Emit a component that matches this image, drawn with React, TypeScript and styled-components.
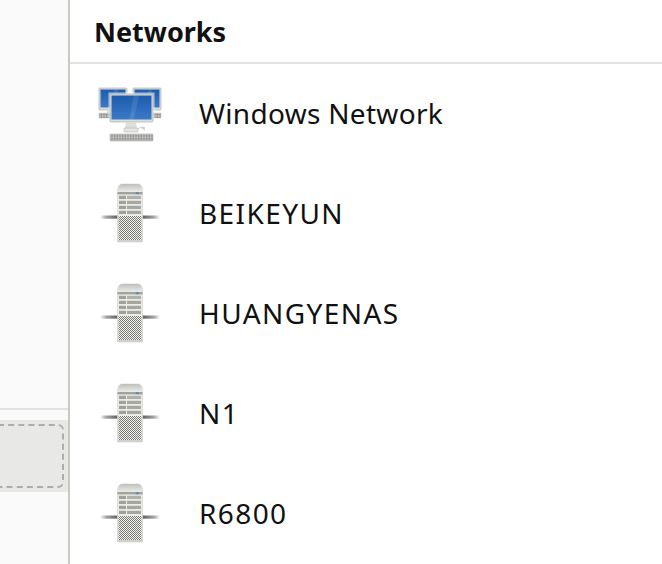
import styled, { createGlobalStyle } from "styled-components";

const hosts = ["BEIKEYUN", "HUANGYENAS", "N1", "R6800"];

const GlobalStyle = createGlobalStyle`
  html, body {
    margin: 0;
    padding: 0;
    background: #ffffff;
    overflow: hidden;
  }
`;

const Monitor = ({ x, y, w, h }: { x: number; y: number; w: number; h: number }) => (
  <g>
    <rect x={x} y={y} width={w} height={h} rx="0.8" fill="#dcdedb" stroke="#a4a6a2" strokeWidth="0.6" />
    <rect x={x + 1.5} y={y + 1.5} width={w - 3} height={h - 4} fill="url(#screen)" />
    <path d={`M${x + w * 0.55} ${y + 1.5} L${x + w * 0.68} ${y + 1.5} L${x + w * 0.55} ${y + h - 2.5} L${x + w * 0.45} ${y + h - 2.5} Z`} fill="#ffffff" opacity="0.1" />
  </g>
);

const NetworkIcon = () => (
  <Icon viewBox="0 0 64 64">
    <defs>
      <linearGradient id="screen" x1="0" y1="0" x2="0" y2="1">
        <stop offset="0" stopColor="#1d5cae" />
        <stop offset="1" stopColor="#3a7ac8" />
      </linearGradient>
      <pattern id="keys" width="1.6" height="1.6" patternUnits="userSpaceOnUse">
        <rect width="1.6" height="1.6" fill="#d4d4d1" />
        <rect width="1" height="1" fill="#6f7170" />
      </pattern>
    </defs>
    {/* back left */}
    <Monitor x={1} y={6} w={28} h={22} />
    <rect x="9" y="28" width="9" height="3" fill="#d6d8d5" />
    <rect x="1" y="31" width="13" height="5" fill="url(#keys)" stroke="#b8b9b6" strokeWidth="0.4" />
    {/* back right */}
    <Monitor x={35} y={6} w={28} h={22} />
    <rect x="46" y="28" width="9" height="3" fill="#d6d8d5" />
    <rect x="55" y="31" width="8" height="5" fill="url(#keys)" stroke="#b8b9b6" strokeWidth="0.4" />
    {/* front */}
    <rect x="10.5" y="10.5" width="46" height="31" fill="#ffffff" opacity="0.6" />
    <Monitor x={12} y={12} w={43} h={28} />
    <path d="M28 40 H38 L39 46 H27 Z" fill="#dedfdc" />
    <rect x="26" y="46" width="14" height="4" rx="1" fill="#e6e7e4" stroke="#a9aba7" strokeWidth="0.5" />
    <path d="M40 47 C44 44 47 45 46 49" fill="none" stroke="#b4b5b2" strokeWidth="0.7" />
    <rect x="44" y="45" width="3" height="2" rx="0.8" fill="#c9cac7" />
    <rect x="12" y="52" width="43" height="7" rx="0.6" fill="url(#keys)" stroke="#aeb0ac" strokeWidth="0.6" />
  </Icon>
);

const ServerIcon = () => (
  <Icon viewBox="0 0 64 64">
    <defs>
      <pattern id="mesh" width="2" height="2" patternUnits="userSpaceOnUse">
        <rect width="2" height="2" fill="#f4f4f2" />
        <rect width="1" height="1" fill="#777872" />
        <rect x="1" y="1" width="1" height="1" fill="#777872" />
      </pattern>
      <linearGradient id="cap" x1="0" y1="0" x2="0" y2="1">
        <stop offset="0" stopColor="#bfc0bb" />
        <stop offset="1" stopColor="#ecece9" />
      </linearGradient>
      <linearGradient id="cable" x1="0" y1="0" x2="1" y2="0">
        <stop offset="0" stopColor="#ffffff" />
        <stop offset="0.35" stopColor="#a5a6a2" />
        <stop offset="1" stopColor="#62635e" />
      </linearGradient>
      <linearGradient id="cableRight" x1="1" y1="0" x2="0" y2="0">
        <stop offset="0" stopColor="#ffffff" />
        <stop offset="0.35" stopColor="#a5a6a2" />
        <stop offset="1" stopColor="#62635e" />
      </linearGradient>
    </defs>
    <rect x="2" y="33.5" width="17.5" height="3.2" fill="url(#cable)" />
    <rect x="44.5" y="33.5" width="17.5" height="3.2" fill="url(#cableRight)" />
    <path d="M19.5 9 Q20 2 24 2 H40 Q44 2 44.5 9 V59 Q44.5 60 43.5 60 H20.5 Q19.5 60 19.5 59 Z" fill="#ebebe7" stroke="#c2c3be" strokeWidth="0.5" />
    <path d="M19.5 10 Q20 2 24 2 H40 Q44 2 44.5 10 Z" fill="url(#cap)" />
    <rect x="19.5" y="10" width="25" height="2.4" fill="#a2a39d" />
    <rect x="37.7" y="10.2" width="3.4" height="2" fill="#5f8bc0" />
    <rect x="21" y="13.8" width="7" height="3.2" fill="#a0a19b" />
    <rect x="29" y="13.8" width="14" height="3.2" fill="#b0b1ab" />
    <rect x="21" y="18.8" width="7" height="3.2" fill="#a0a19b" />
    <rect x="29" y="18.8" width="14" height="3.2" fill="#a6a7a1" />
    <rect x="21" y="23.8" width="7" height="3.2" fill="#a0a19b" />
    <rect x="29" y="23.8" width="14" height="3.2" fill="#a6a7a1" />
    <rect x="21" y="28.8" width="7" height="3.2" fill="#a0a19b" />
    <rect x="29" y="28.8" width="14" height="3.2" fill="#a6a7a1" />
    <rect x="20.5" y="34" width="23" height="24" fill="url(#mesh)" />
    <rect x="19.5" y="58" width="25" height="2" fill="#d0d1cc" />
  </Icon>
);

const App = () => (
  <>
    <GlobalStyle />
    <Window>
      <Sidebar>
        <SidebarList />
        <DropStrip>
          <DropZone />
        </DropStrip>
        <SidebarFoot />
      </Sidebar>
      <Main>
        <Header>Networks</Header>
        <List>
          <Row>
            <NetworkIcon />
            <Label $spacing={0.3}>Windows Network</Label>
          </Row>
          {hosts.map((host) => (
            <Row key={host}>
              <ServerIcon />
              <Label $spacing={1.4}>{host}</Label>
            </Row>
          ))}
        </List>
      </Main>
    </Window>
  </>
);

export default App;

const Window = styled.div`
  display: flex;
  width: 662px;
  height: 564px;
  overflow: hidden;
  font-family: "Noto Sans", "Open Sans", sans-serif;
  color: #111111;
`;

const Sidebar = styled.div`
  display: flex;
  flex-direction: column;
  width: 68px;
  flex-shrink: 0;
  background: #fafafa;
  border-right: 2px solid #cdc7c2;
`;

const SidebarList = styled.div`
  height: 408px;
  border-bottom: 2px solid #e2e2e1;
  box-sizing: content-box;
`;

const DropStrip = styled.div`
  display: flex;
  height: 72px;
  margin-top: 10px;
  padding: 4px 4px 4px 0;
  box-sizing: border-box;
  background: #e8e8e7;
`;

const DropZone = styled.div`
  flex: 1;
  box-sizing: border-box;
  margin-left: -8px;
  border: 2px dashed #adadac;
  border-radius: 6px;
`;

const SidebarFoot = styled.div`
  flex: 1;
`;

const Main = styled.div`
  flex: 1;
  display: flex;
  flex-direction: column;
  min-width: 0;
  background: #ffffff;
`;

const Header = styled.div`
  display: flex;
  align-items: center;
  height: 62px;
  padding-left: 24px;
  border-bottom: 2px solid #e2e2e1;
  font-size: 27px;
  font-weight: 700;
  color: #111111;
`;

const List = styled.div`
  display: flex;
  flex-direction: column;
`;

const Row = styled.div`
  display: flex;
  align-items: center;
  flex-shrink: 0;
  height: 100px;
  padding-left: 28px;
  gap: 37px;
`;

const Icon = styled.svg`
  width: 64px;
  height: 64px;
  flex-shrink: 0;
  filter: blur(0.3px);
`;

const Label = styled.span<{ $spacing: number }>`
  margin-top: -3px;
  font-size: 28px;
  font-weight: 400;
  letter-spacing: ${(props) => props.$spacing}px;
  white-space: nowrap;
`;
